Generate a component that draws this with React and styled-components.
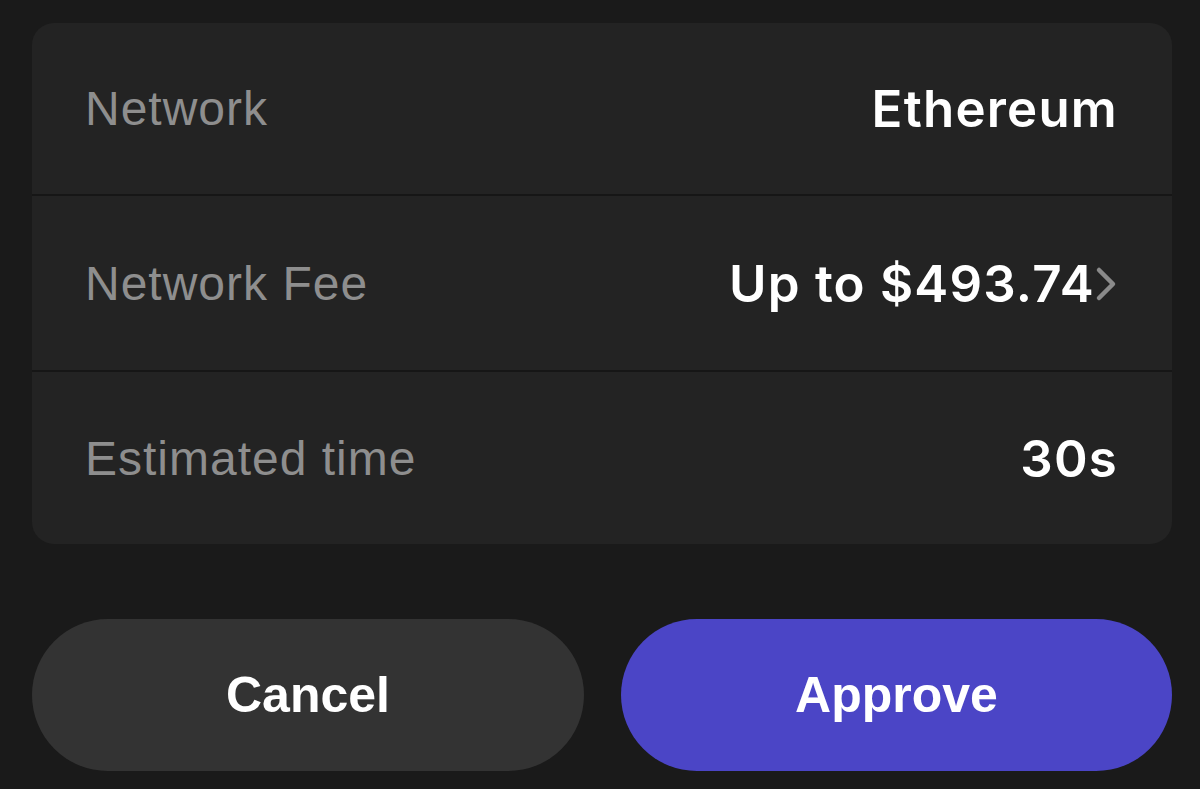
import React from "react";
import styled, { createGlobalStyle } from "styled-components";

const Global = createGlobalStyle`
  html, body { margin: 0; padding: 0; background: #1a1a1a; }
  body { font-family: "Liberation Sans", Arial, sans-serif; }
`;

const Page = styled.div`
  width: 1200px;
  height: 789px;
  box-sizing: border-box;
  padding: 23px 28px 0 32px;
  background: #1a1a1a;
  display: flex;
  flex-direction: column;
`;

const Card = styled.div`
  background: #232323;
  border-radius: 22px;
  overflow: hidden;
  display: flex;
  flex-direction: column;
`;

const Row = styled.div`
  height: ${(p) => p.$h}px;
  display: flex;
  align-items: center;
  justify-content: space-between;
  padding: 0 54px 0 53px;
  border-top: ${(p) => (p.$first ? "none" : "2px solid #161616")};
`;

const Label = styled.span`
  font-family: "Liberation Sans", Arial, sans-serif;
  font-size: 48px;
  letter-spacing: 1px;
  color: #8e8e8e;
`;

const Value = styled.span`
  font-family: Inter, "Open Sans", sans-serif;
  font-weight: 600;
  font-size: 51px;
  letter-spacing: 1.2px;
  color: #ffffff;
  display: flex;
  align-items: center;
`;

const Chevron = styled.svg`
  width: 23px;
  height: 36px;
  margin-left: 0;
  margin-top: 2px;
`;

const Actions = styled.div`
  margin-top: 75px;
  display: grid;
  grid-template-columns: 552px 551px;
  column-gap: 37px;
`;

const Button = styled.button`
  height: 152px;
  border: none;
  border-radius: 76px;
  background: ${(p) => (p.$primary ? "#4b45c6" : "#333333")};
  color: #ffffff;
  font-family: "Liberation Sans", Arial, sans-serif;
  font-weight: 700;
  font-size: 50px;
  display: flex;
  align-items: center;
  justify-content: center;
  padding: 0;
  cursor: pointer;
`;

export default function App() {
  return (
    <>
      <Global />
      <Page>
        <Card>
          <Row $first $h={171}>
            <Label>Network</Label>
            <Value>Ethereum</Value>
          </Row>
          <Row $h={174}>
            <Label>Network Fee</Label>
            <Value>
              Up to $493.74
              <Chevron viewBox="0 0 23 36" fill="none">
                <path d="M4 4 L18 18 L4 32" stroke="#8a8a8a" strokeWidth="4.5" strokeLinecap="round" strokeLinejoin="round" />
              </Chevron>
            </Value>
          </Row>
          <Row $h={172}>
            <Label>Estimated time</Label>
            <Value>30s</Value>
          </Row>
        </Card>
        <Actions>
          <Button>Cancel</Button>
          <Button $primary>Approve</Button>
        </Actions>
      </Page>
    </>
  );
}
